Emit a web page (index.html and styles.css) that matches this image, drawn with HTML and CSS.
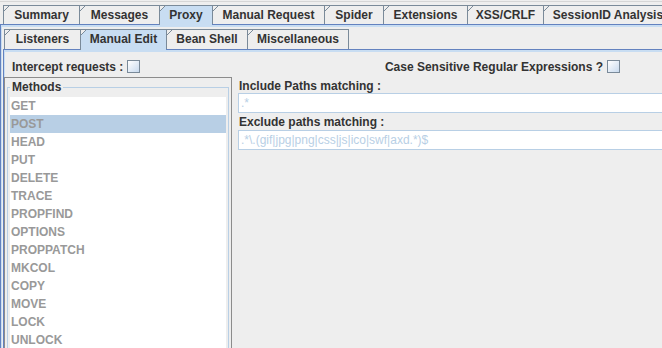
FILE: index.html
```html
<!DOCTYPE html>
<html lang="en">
<head>
    <meta charset="UTF-8">
    <title>Proxy - Manual Edit</title>
    <link rel="stylesheet" href="styles.css">
</head>
<body>
    <div class="app">
        <div class="tabs top">
            <div class="tab">Summary</div>
            <div class="tab">Messages</div>
            <div class="tab selected">Proxy</div>
            <div class="tab">Manual Request</div>
            <div class="tab">Spider</div>
            <div class="tab">Extensions</div>
            <div class="tab">XSS/CRLF</div>
            <div class="tab">SessionID Analysis</div>
        </div>
        <div class="pane outer">
            <div class="tabs sub">
                <div class="tab">Listeners</div>
                <div class="tab selected">Manual Edit</div>
                <div class="tab">Bean Shell</div>
                <div class="tab">Miscellaneous</div>
            </div>
            <div class="pane inner">
                <div class="opts">
                    <label class="opt">Intercept requests : <span class="check"></span></label>
                    <label class="opt case">Case Sensitive Regular Expressions ? <span class="check"></span></label>
                </div>
                <div class="content">
                    <div class="methods-box">
                        <fieldset class="methods">
                            <legend>Methods</legend>
                            <ul class="list">
                                <li>GET</li>
                                <li class="selected">POST</li>
                                <li>HEAD</li>
                                <li>PUT</li>
                                <li>DELETE</li>
                                <li>TRACE</li>
                                <li>PROPFIND</li>
                                <li>OPTIONS</li>
                                <li>PROPPATCH</li>
                                <li>MKCOL</li>
                                <li>COPY</li>
                                <li>MOVE</li>
                                <li>LOCK</li>
                                <li>UNLOCK</li>
                            </ul>
                        </fieldset>
                    </div>
                    <div class="paths">
                        <div class="plabel">Include Paths matching :</div>
                        <div class="field">.*</div>
                        <div class="plabel">Exclude paths matching :</div>
                        <div class="field">.*\.(gif|jpg|png|css|js|ico|swf|axd.*)$</div>
                    </div>
                </div>
            </div>
        </div>
    </div>
</body>
</html>
```

FILE: styles.css
```css
body {
    margin: 0;
    background-color: #eeeeee;
    font-family: "Liberation Sans", Arial, sans-serif;
    font-weight: bold;
    font-size: 12px;
    color: #333333;
    height: 348px;
    overflow: hidden;
}
.app {
    margin-top: 1px;
    border-top: 1px solid #d6d6d6;
}
.tabs {
    display: flex;
}
.tabs.top {
    padding: 3px 0 0 3px;
}
.tabs.sub {
    padding-left: 1px;
}
.tab {
    position: relative;
    flex: none;
    box-sizing: border-box;
    border: 1px solid #7a8a99;
    border-bottom: none;
    border-right: none;
    text-align: center;
    white-space: nowrap;
    overflow: hidden;
}
.tab::before {
    content: "";
    position: absolute;
    left: -1px;
    top: -1px;
    width: 7px;
    height: 7px;
    background: linear-gradient(to bottom right, #eeeeee calc(50% - 0.6px), #7a8a99 calc(50% - 0.6px), #7a8a99 calc(50% + 0.6px), transparent calc(50% + 0.6px));
}
.tab:last-child {
    border-right: 1px solid #7a8a99;
}
.tab.selected {
    background-color: #c8ddf2;
    z-index: 1;
}
.tabs.top .tab {
    height: 19px;
    line-height: 18px;
}
.tabs.top .tab.selected {
    height: 20px;
    margin-bottom: -1px;
}
.tabs.top .tab:nth-child(1) { width: 76px; }
.tabs.top .tab:nth-child(2) { width: 80px; }
.tabs.top .tab:nth-child(3) { width: 53px; }
.tabs.top .tab:nth-child(4) { width: 112px; }
.tabs.top .tab:nth-child(5) { width: 59px; }
.tabs.top .tab:nth-child(6) { width: 84px; }
.tabs.top .tab:nth-child(7) { width: 76px; }
.tabs.top .tab:nth-child(8) { width: 130px; }
.tabs.sub .tab {
    height: 20px;
    line-height: 19px;
}
.tabs.sub .tab.selected {
    height: 21px;
    margin-bottom: -1px;
}
.tabs.sub .tab:nth-child(1) { width: 76px; }
.tabs.sub .tab:nth-child(2) { width: 86px; }
.tabs.sub .tab:nth-child(3) { width: 81px; }
.tabs.sub .tab:nth-child(4) { width: 102px; }
.pane {
    box-sizing: border-box;
    border-top: 1px solid #6382bf;
    border-left: 1px solid #6382bf;
    box-shadow: inset 1px 2px 0 #c8ddf2;
}
.pane.outer {
    padding: 4px 0 0 2px;
    height: 324px;
}
.pane.inner {
    padding-top: 2px;
    height: 299px;
}
.opts {
    display: flex;
    align-items: center;
    height: 21px;
    margin-top: 4px;
    padding-left: 8px;
}
.opt {
    display: flex;
    align-items: center;
}
.opt.case {
    margin-left: auto;
    margin-right: 42px;
}
.check {
    display: inline-block;
    box-sizing: border-box;
    width: 13px;
    height: 13px;
    margin-left: 4px;
    border: 1px solid #7a8a99;
    background: linear-gradient(135deg, #ffffff, #c8daee);
}
.content {
    display: flex;
    align-items: flex-start;
}
.methods-box {
    box-sizing: border-box;
    width: 228px;
    height: 271px;
    padding: 2px 2px 0 2px;
    border: 1px solid #8c8c8c;
    border-bottom: none;
}
.methods {
    box-sizing: border-box;
    margin: 0;
    padding: 2px 2px 0 2px;
    border: 1px solid #b8cfe5;
    border-bottom: none;
    height: 268px;
}
.methods legend {
    padding: 0 2px;
    line-height: 15px;
    color: #333333;
}
.list {
    list-style: none;
    margin: 0;
    padding: 0;
    background-color: #ffffff;
    height: 260px;
}
.list li {
    height: 18px;
    line-height: 18px;
    padding-left: 1px;
    color: #999999;
}
.list li.selected {
    background-color: #b8cfe5;
}
.paths {
    flex: 1;
    margin: 0 -10px 0 6px;
}
.plabel {
    height: 15px;
    line-height: 15px;
    margin-top: 2px;
    padding-left: 1px;
}
.plabel:first-child {
    height: 14px;
}
.field {
    box-sizing: border-box;
    height: 20px;
    line-height: 18px;
    padding-left: 2px;
    border: 1px solid #b8cfe5;
    background-color: #ffffff;
    color: #b8cfe5;
    font-weight: normal;
}
```
